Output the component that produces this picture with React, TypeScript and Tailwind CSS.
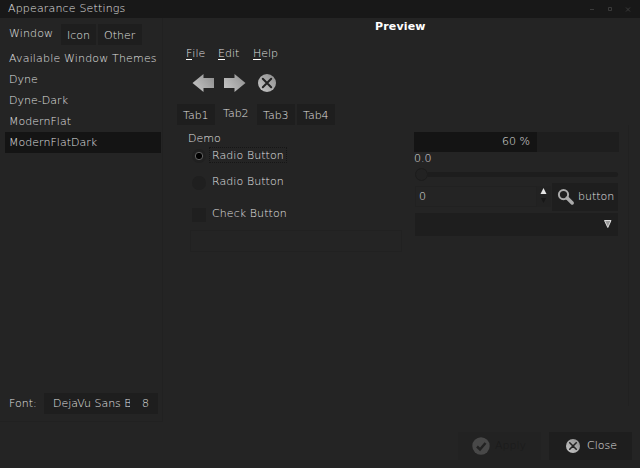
import type { ReactNode } from "react";

function Txt({ children, className = "" }: { children: ReactNode; className?: string }) {
  return <span className={`block whitespace-pre leading-[16px] h-[14px] ${className}`}>{children}</span>;
}

function CloseIcon({ size }: { size: number }) {
  return (
    <svg width={size} height={size} viewBox="0 0 18 18">
      <defs>
        <linearGradient id="disc" x1="1" y1="0" x2="0" y2="1">
          <stop offset="0" stopColor="#8c8c8c" />
          <stop offset="1" stopColor="#c8c8c8" />
        </linearGradient>
      </defs>
      <circle cx="9" cy="9" r="9" fill="url(#disc)" />
      <path d="M4.8 4.8 13.2 13.2M13.2 4.8 4.8 13.2" stroke="#242424" strokeWidth="2" strokeLinecap="round" />
    </svg>
  );
}

function Arrow({ right = false }: { right?: boolean }) {
  return (
    <svg width="22" height="18" viewBox="0 0 22 18">
      <defs>
        <linearGradient id="arrow" x1="0" y1="0.8" x2="1" y2="0.2">
          <stop offset="0" stopColor="#c4c4c4" />
          <stop offset="1" stopColor="#929292" />
        </linearGradient>
      </defs>
      <path
        d={right ? "M21.5 9 10.5 0V4H0V14H10.5V18Z" : "M0.5 9 11.5 0V4H22V14H11.5V18Z"}
        fill="url(#arrow)"
      />
    </svg>
  );
}

function Tab({ label, active = false, className }: { label: string; active?: boolean; className: string }) {
  return (
    <div className={`h-[21px] ${active ? "pt-[2px]" : "bg-[#1e1e1e] pt-[4px]"} ${className}`}>
      <Txt>{label}</Txt>
    </div>
  );
}

function LeftPane() {
  return (
    <div className="w-[163px] h-[404px] border-r border-b border-[#212121]">
      <div className="flex pt-[6px] pl-[9px] gap-[2px]">
        <Tab label="Window" active className="w-[50px] tracking-[0.15px]" />
        <Tab label="Icon" className="w-[35px] pl-[6px]" />
        <Tab label="Other" className="w-[44px] pl-[6px]" />
      </div>
      <div className="mt-[3px] ml-[5px] h-[345px]">
        {["Available Window Themes", "Dyne", "Dyne-Dark", "ModernFlat", "ModernFlatDark"].map((t, i) => (
          <div key={t} className={`h-[21px] w-[156px] pl-[4px] pt-[3px] ${i === 4 ? "bg-[#141414]" : ""}`}>
            <Txt className={i === 0 ? "tracking-[0.17px]" : "tracking-[0.03px]"}>{t}</Txt>
          </div>
        ))}
      </div>
      <div className="flex h-[21px] pl-[9px]">
        <Txt className="w-[35px] mt-[3px]">Font:</Txt>
        <div className="flex w-[114px] bg-[#1e1e1e] pl-[9px] pt-[3px]">
          <Txt className="w-[77px] overflow-hidden">DejaVu Sans B</Txt>
          <Txt className="ml-[12px]">8</Txt>
        </div>
      </div>
    </div>
  );
}

function Option({ children, label, className, textClass = "" }: { children: ReactNode; label: string; className: string; textClass?: string }) {
  return (
    <div className={`flex pl-[4px] ${className}`}>
      <div className="mt-[1px] mr-[4px] h-[14px] w-[14px]">{children}</div>
      <Txt className={`px-[2px] tracking-[0.08px] ${textClass}`}>{label}</Txt>
    </div>
  );
}

function DemoColumn() {
  return (
    <div className="w-[226px] pl-[11px] pt-[6px]">
      <Txt>Demo</Txt>
      <Option label="Radio Button" className="mt-[3px]" textClass="outline-1 outline-dotted outline-[#161616]">
        <svg width="14" height="14">
          <circle cx="7" cy="7" r="7" fill="#202020" />
          <circle cx="7" cy="7" r="3.7" fill="#000" stroke="#6c6c6c" strokeWidth="0.9" />
        </svg>
      </Option>
      <Option label="Radio Button" className="mt-[12px]" textClass="-mt-[1px]">
        <div className="h-[14px] w-[14px] rounded-full bg-[#1f1f1f]" />
      </Option>
      <Option label="Check Button" className="mt-[17px]" textClass="-mt-[1px]">
        <div className="h-[14px] w-[14px] bg-[#1f1f1f]" />
      </Option>
      <div className="mt-[8px] ml-[2px] h-[22px] w-[212px] border border-[#212121]" />
    </div>
  );
}

function ControlColumn() {
  return (
    <div className="w-[205px] ml-[11px] pt-[7px]">
      <div className="h-[20px] bg-[#1e1e1e]">
        <div className="h-full w-[123px] bg-[#141414] pl-[88px] pt-[2px]"><Txt>60 %</Txt></div>
      </div>
      <Txt className="-mt-[1px]">0.0</Txt>
      <div className="ml-[1px] mt-[3px] flex h-[13px] w-[203px] items-center">
        <div className="h-[13px] w-[13px] shrink-0 rounded-full border border-[#1c1c1c] bg-[#222]" />
        <div className="h-[5px] grow rounded-r-full bg-[#1d1d1d]" />
      </div>
      <div className="ml-[1px] mt-[2px] flex w-[203px]">
        <div className="mt-[3px] flex h-[21px] w-[122px] border border-[#212121] pl-[3px] pt-[2px]"><Txt>0</Txt></div>
        <svg className="mt-[3px]" width="14" height="21">
          <rect width="14" height="21" fill="#222" />
          <path d="M6.5 2 9.5 8H3.5Z" fill="#e4e4e4" />
          <path d="M6.5 17 9 12H4Z" fill="#171717" />
        </svg>
        <div className="ml-[1px] flex h-[28px] w-[66px] bg-[#1e1e1e] pl-[5px] pt-[6px]">
          <svg width="18" height="17" viewBox="0 0 18 17">
            <circle cx="6.5" cy="5.6" r="4.6" fill="none" stroke="#aaa" strokeWidth="2" />
            <path d="M10.2 9 15.2 14" stroke="#aaa" strokeWidth="3.5" strokeLinecap="round" />
          </svg>
          <Txt className="ml-[3px]">button</Txt>
        </div>
      </div>
      <div className="ml-[1px] mt-[2px] h-[23px] w-[203px] bg-[#1e1e1e] pl-[189px] pt-[7px]">
        <svg width="8" height="8">
          <path d="M0.5 0.5H7L3.8 7.5Z" fill="#999" stroke="#ddd" />
        </svg>
      </div>
    </div>
  );
}

function Preview() {
  return (
    <div className="w-[466px] pl-[11px]">
      <div className="flex pt-[1px] pl-[201px] font-bold text-white"><Txt className="tracking-[0.15px]">Preview</Txt></div>
      <div className="flex pt-[13px] pl-[12px]">
        {["File", "Edit", "Help"].map((m, i) => (
          <Txt key={m} className={i === 1 ? "w-[35px]" : "w-[32px]"}>
            <span className="inline-block h-[14px] border-b border-white leading-[16px]">{m[0]}</span>
            {m.slice(1)}
          </Txt>
        ))}
      </div>
      <div className="mt-[14px] ml-[18px] flex h-[18px]">
        <Arrow />
        <div className="ml-[10px]"><Arrow right /></div>
        <div className="ml-[12px]"><CloseIcon size={18} /></div>
      </div>
      <div className="mt-[12px] ml-[3px] flex gap-[2px]">
        <Tab label="Tab1" className="w-[38px] pl-[6px]" />
        <Tab label="Tab2" active className="w-[38px] pl-[6px]" />
        <Tab label="Tab3" className="w-[38px] pl-[6px]" />
        <Tab label="Tab4" className="w-[38px] pl-[6px]" />
      </div>
      <div className="ml-[3px] flex h-[281px] w-[452px] border-r border-[#212121]">
        <DemoColumn />
        <ControlColumn />
      </div>
    </div>
  );
}

export default function App() {
  return (
    <div className="h-[468px] w-[640px] overflow-hidden bg-[#242424] font-['DejaVu_Sans',sans-serif] text-[11px] font-extralight text-[#e0e0e0]">
      <div className="flex h-[18px] bg-[#181818] pl-[8px] pt-[1px]">
        <Txt className="w-[581px] tracking-[0.17px]">Appearance Settings</Txt>
        <svg className="mt-[5px]" width="44" height="8" fill="none" stroke="#3a3a3a">
          <path d="M1 3.5H5M19.5 1.5H22.5V4.5H19.5ZM37 1.5 41 5.5M41 1.5 37 5.5" />
        </svg>
      </div>
      <div className="flex h-[414px]">
        <LeftPane />
        <Preview />
      </div>
      <div className="flex pl-[458px]">
        <div className="flex h-[28px] w-[83px] bg-[#222] pl-[14px] pt-[5px] text-[#191919]">
          <svg width="18" height="18">
            <circle cx="9" cy="9" r="8.7" fill="#484848" />
            <path d="M5 9.5 8 12.5 13.5 6" fill="none" stroke="#222" strokeWidth="2.5" />
          </svg>
          <Txt className="ml-[5px] mt-[1px]">Apply</Txt>
        </div>
        <div className="ml-[8px] flex h-[28px] w-[83px] bg-[#1e1e1e] pl-[17px] pt-[7px]">
          <CloseIcon size={14} />
          <Txt className="ml-[7px] -mt-[1px]">Close</Txt>
        </div>
      </div>
    </div>
  );
}
